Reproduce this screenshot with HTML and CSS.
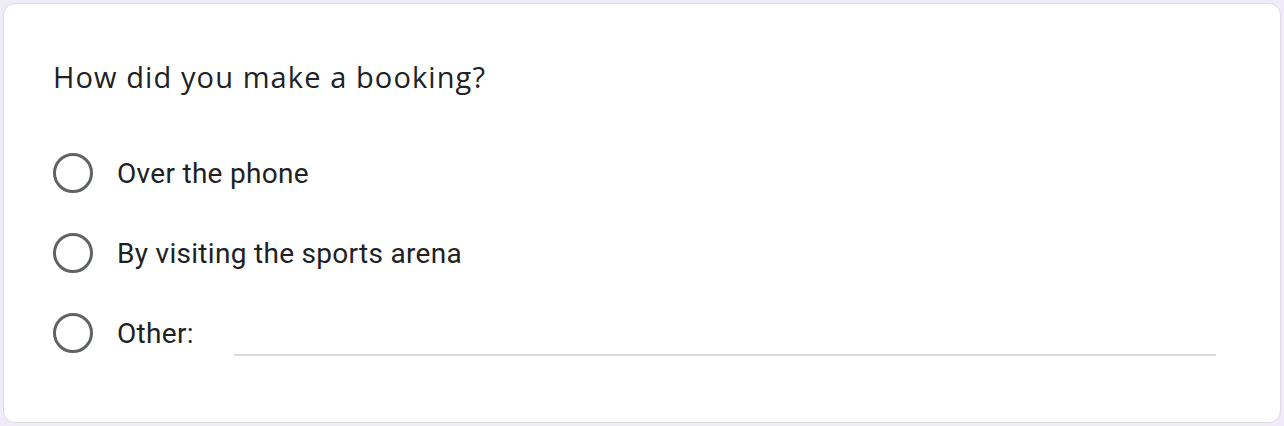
FILE: index.html
```html
<!DOCTYPE html>
<html>
<head>
<meta charset="utf-8">
<link rel="stylesheet" href="styles.css">
</head>
<body>
<div class="card">
  <div class="question">How did you make a booking?</div>
  <div class="options">
    <label class="option">
      <span class="radio"></span>
      <span class="label">Over the phone</span>
    </label>
    <label class="option">
      <span class="radio"></span>
      <span class="label">By visiting the sports arena</span>
    </label>
    <label class="option">
      <span class="radio"></span>
      <span class="label">Other:</span>
      <span class="other-input"></span>
    </label>
  </div>
</div>
</body>
</html>
```
FILE: styles.css
```css
html, body {
  margin: 0;
  padding: 0;
}
body {
  background: #f0ebf8;
  padding: 3px;
  width: 1278px;
  height: 420px;
}
.card {
  box-sizing: border-box;
  width: 1278px;
  height: 420px;
  background: #fff;
  border: 1px solid #dadce0;
  border-radius: 12px;
  padding: 53px 64px 0 49px;
}
.question {
  font-family: "Open Sans", sans-serif;
  font-size: 29px;
  line-height: 40px;
  letter-spacing: 1.1px;
  color: #202124;
}
.options {
  margin-top: 36px;
  display: flex;
  flex-direction: column;
}
.option {
  display: flex;
  align-items: center;
  height: 80px;
}
.radio {
  box-sizing: border-box;
  width: 40px;
  height: 40px;
  border: 3.5px solid #5f6368;
  border-radius: 50%;
  flex: none;
}
.label {
  margin-left: 24px;
  font-family: Roboto, sans-serif;
  font-size: 28px;
  letter-spacing: 0.3px;
  color: #202124;
}
.other-input {
  flex: 1;
  align-self: stretch;
  margin-left: 40px;
  margin-bottom: 17px;
  border-bottom: 2px solid #dadce0;
}
```
